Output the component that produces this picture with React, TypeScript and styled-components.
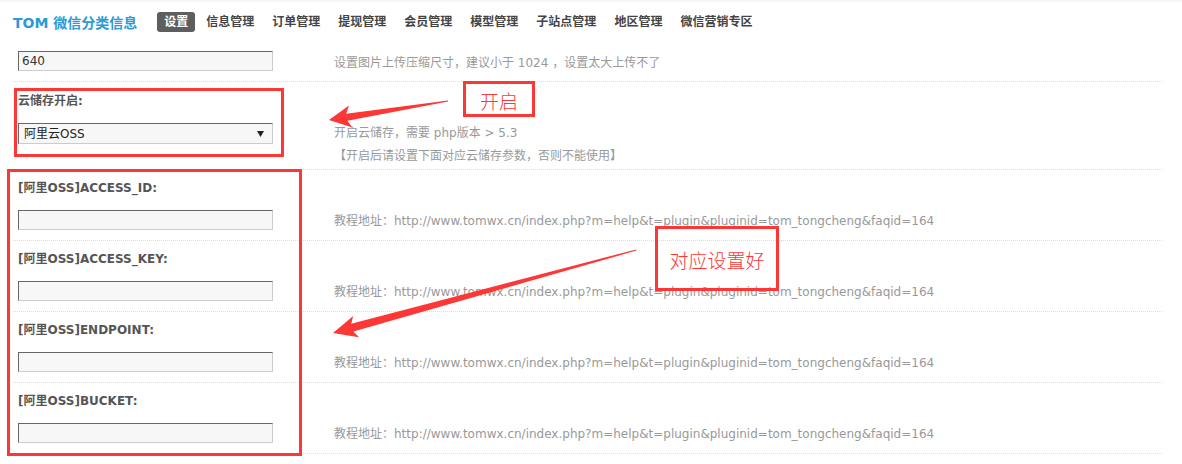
import React from "react";
import styled, { createGlobalStyle } from "styled-components";

const GlobalStyle = createGlobalStyle`
  body {
    margin: 0;
    background: #fff;
    font-family: "DejaVu Sans", Verdana, "Noto Sans CJK SC", sans-serif;
    font-size: 12px;
    color: #555;
  }
`;

const Page = styled.div`
  position: relative;
  width: 1182px;
  height: 464px;
  overflow: hidden;
`;

const Header = styled.div`
  display: flex;
  align-items: center;
  height: 39px;
  padding-left: 13px;
  border-top: 2px solid #f4f7fa;
`;

const Brand = styled.div`
  font-size: 14px;
  font-weight: bold;
  color: #2a9ad6;
  margin-right: 20px;
  white-space: nowrap;
`;

const Nav = styled.ul`
  display: flex;
  gap: 4px;
  margin: 0;
  padding: 0;
  list-style: none;
`;

const NavItem = styled.li<{ $active?: boolean }>`
  padding: 0 7px;
  height: 20px;
  line-height: 20px;
  border-radius: 3px;
  font-weight: bold;
  font-size: 12px;
  color: ${(p) => (p.$active ? "#fff" : "#444")};
  background: ${(p) => (p.$active ? "#5e5e5e" : "transparent")};
`;

const Table = styled.div`
  margin: 0 20px 0 13px;
`;

const Row = styled.div`
  display: grid;
  grid-template-columns: 300px 1fr;
  border-bottom: 1px dotted #c9e3f5;
`;

const Cell = styled.div<{ $top: number; $bottom: number }>`
  display: flex;
  flex-direction: column;
  padding: ${(p) => p.$top}px 0 ${(p) => p.$bottom}px 5px;
`;

const Desc = styled.div<{ $bottom: number }>`
  display: flex;
  flex-direction: column;
  justify-content: flex-end;
  gap: 7px;
  padding: 0 0 ${(p) => p.$bottom}px 21px;
  color: #999;
  line-height: 16px;
  white-space: nowrap;
`;

const Label = styled.label<{ $gap?: number }>`
  font-weight: bold;
  color: #555;
  line-height: 16px;
  margin-bottom: ${(p) => p.$gap ?? 14}px;
`;

const TextInput = styled.input`
  box-sizing: border-box;
  width: 255px;
  height: 20px;
  margin: 0;
  padding: 0 3px;
  font: inherit;
  font-size: 12px;
  color: #333;
  background: #f7f7f7;
  border: 1px solid #cccccc;
  border-top-color: #666;
  border-left-color: #666;
  outline: none;
`;

const SelectWrap = styled.div`
  position: relative;
  width: 255px;
  height: 21px;
`;

const Select = styled.select`
  appearance: none;
  box-sizing: border-box;
  width: 100%;
  height: 100%;
  margin: 0;
  padding: 0 0 0 5px;
  font: inherit;
  font-size: 12px;
  color: #222;
  background: #f7f7f7;
  border: 1px solid #cccccc;
  border-top-color: #666;
  border-left-color: #666;
  border-radius: 0;
  outline: none;
`;

const Caret = styled.svg`
  position: absolute;
  right: 9px;
  top: 8px;
  pointer-events: none;
`;

const Overlay = styled.div`
  position: absolute;
  inset: 0;
  pointer-events: none;
`;

const RedBox = styled.div<{ $x: number; $y: number; $w: number; $h: number }>`
  position: absolute;
  left: ${(p) => p.$x}px;
  top: ${(p) => p.$y}px;
  width: ${(p) => p.$w}px;
  height: ${(p) => p.$h}px;
  box-sizing: border-box;
  border: 3px solid #fd3636;
`;

const Callout = styled(RedBox)`
  display: flex;
  align-items: center;
  justify-content: center;
  font-family: "Noto Sans CJK SC", sans-serif;
  font-size: 19px;
  font-weight: 300;
  color: #fd3636;
  padding-top: 2px;
`;

const Arrows = styled.svg`
  position: absolute;
  left: 0;
  top: 0;
`;

const tutorial =
  "教程地址：http://www.tomwx.cn/index.php?m=help&t=plugin&pluginid=tom_tongcheng&faqid=164";

const navItems = ["设置", "信息管理", "订单管理", "提现管理", "会员管理", "模型管理", "子站点管理", "地区管理", "微信营销专区"];

const ossFields = ["ACCESS_ID", "ACCESS_KEY", "ENDPOINT", "BUCKET"];

export default function App() {
  return (
    <Page>
      <GlobalStyle />
      <Header>
        <Brand>TOM 微信分类信息</Brand>
        <Nav>
          {navItems.map((n, i) => (
            <NavItem key={n} $active={i === 0}>
              {n}
            </NavItem>
          ))}
        </Nav>
      </Header>

      <Table>
        <Row>
          <Cell $top={10} $bottom={10}>
            <TextInput defaultValue="640" />
          </Cell>
          <Desc $bottom={10}>
            <span>设置图片上传压缩尺寸，建议小于 1024 ，设置太大上传不了</span>
          </Desc>
        </Row>

        <Row>
          <Cell $top={11} $bottom={25}>
            <Label>云储存开启:</Label>
            <SelectWrap>
              <Select defaultValue="oss">
                <option value="0">关闭</option>
                <option value="oss">阿里云OSS</option>
              </Select>
              <Caret width="7" height="6" viewBox="0 0 7 6">
                <path d="M0 0 H7 L3.5 6 Z" fill="#222" />
              </Caret>
            </SelectWrap>
          </Cell>
          <Desc $bottom={5}>
            <span>开启云储存，需要 php版本 &gt; 5.3</span>
            <span>【开启后请设置下面对应云储存参数，否则不能使用】</span>
          </Desc>
        </Row>

        {ossFields.map((f) => (
          <Row key={f}>
            <Cell $top={10} $bottom={10}>
              <Label>[阿里OSS]{f}:</Label>
              <TextInput />
            </Cell>
            <Desc $bottom={11}>
              <span>{tutorial}</span>
            </Desc>
          </Row>
        ))}
      </Table>

      <Overlay>
        <RedBox $x={14} $y={88} $w={270} $h={69} />
        <RedBox $x={7} $y={169} $w={295} $h={287} />
        <Callout $x={463} $y={81} $w={72} $h={36}>
          开启
        </Callout>
        <Callout $x={655} $y={226} $w={124} $h={65}>
          对应设置好
        </Callout>
        <Arrows width="1182" height="464" viewBox="0 0 1182 464">
          <polygon
            fill="#fd3636"
            points="447.9,100.4 346.2,113.7 349,105.6 329,120 352.4,127.4 347.4,120.7 448.1,101.6"
          />
          <polygon
            fill="#fd3636"
            points="636.1,249.4 351.2,323.8 353.2,316.1 333,333 359,337.3 353.4,331.6 636.3,250.6"
          />
        </Arrows>
      </Overlay>
    </Page>
  );
}
